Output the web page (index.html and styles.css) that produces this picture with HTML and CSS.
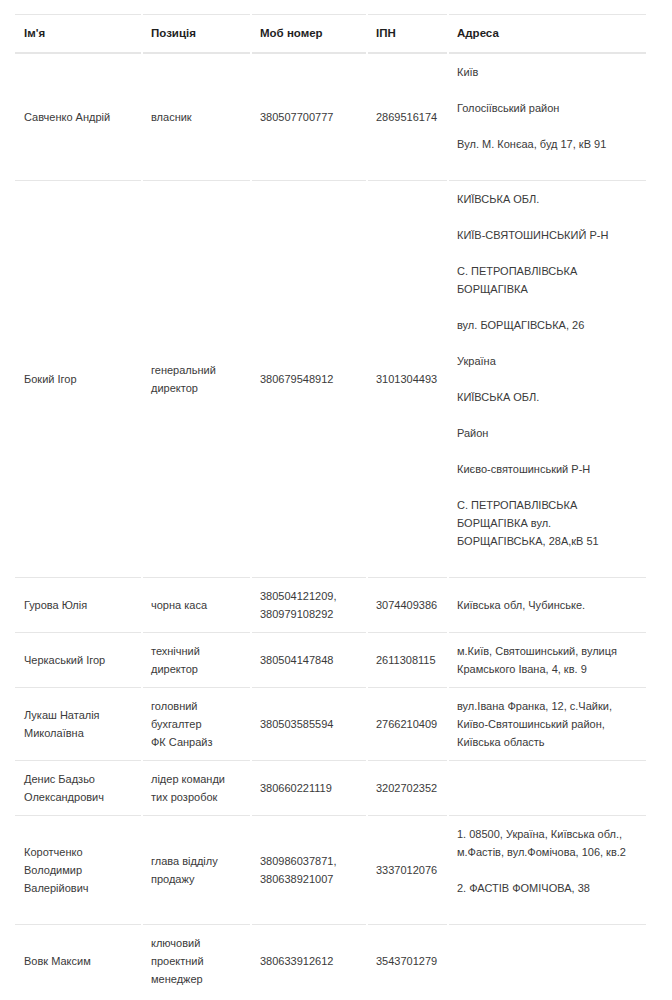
FILE: index.html
```html
<!DOCTYPE html>
<html lang="uk">
<head>
<meta charset="utf-8">
<title>Контакти</title>
<link rel="stylesheet" href="styles.css">
</head>
<body>
<div class="wrap">
<table class="people">
  <colgroup>
    <col class="c-name"><col class="c-pos"><col class="c-phone"><col class="c-ipn"><col class="c-addr">
  </colgroup>
  <thead>
    <tr><th>Ім'я</th><th>Позиція</th><th>Моб номер</th><th>ІПН</th><th>Адреса</th></tr>
  </thead>
  <tbody>
    <tr>
      <td>Савченко Андрій</td>
      <td>власник</td>
      <td>380507700777</td>
      <td>2869516174</td>
      <td><p>Київ</p><p>Голосіївський район</p><p>Вул. М. Конєаа, буд 17, кВ 91</p></td>
    </tr>
    <tr>
      <td>Бокий Ігор</td>
      <td>генеральний директор</td>
      <td>380679548912</td>
      <td>3101304493</td>
      <td><p>КИЇВСЬКА ОБЛ.</p><p>КИЇВ-СВЯТОШИНСЬКИЙ Р-Н</p><p>С. ПЕТРОПАВЛІВСЬКА БОРЩАГІВКА</p><p>вул. БОРЩАГІВСЬКА, 26</p><p>Україна</p><p>КИЇВСЬКА ОБЛ.</p><p>Район</p><p>Києво-святошинський Р-Н</p><p>С. ПЕТРОПАВЛІВСЬКА БОРЩАГІВКА вул. БОРЩАГІВСЬКА, 28А,кВ 51</p></td>
    </tr>
    <tr>
      <td>Гурова Юлія</td>
      <td>чорна каса</td>
      <td>380504121209, 380979108292</td>
      <td>3074409386</td>
      <td>Київська обл, Чубинське.</td>
    </tr>
    <tr>
      <td>Черкаський Ігор</td>
      <td>технічний директор</td>
      <td>380504147848</td>
      <td>2611308115</td>
      <td>м.Київ, Святошинський, вулиця Крамського Івана, 4, кв. 9</td>
    </tr>
    <tr>
      <td>Лукаш Наталія Миколаївна</td>
      <td>головний бухгалтер<br>ФК Санрайз</td>
      <td>380503585594</td>
      <td>2766210409</td>
      <td>вул.Івана Франка, 12, с.Чайки, Київо-Святошинський район, Київська область</td>
    </tr>
    <tr>
      <td>Денис Бадзьо Олександрович</td>
      <td>лідер команди тих розробок</td>
      <td>380660221119</td>
      <td>3202702352</td>
      <td></td>
    </tr>
    <tr>
      <td>Коротченко Володимир Валерійович</td>
      <td>глава відділу продажу</td>
      <td>380986037871, 380638921007</td>
      <td>3337012076</td>
      <td><p>1. 08500, Україна, Київська обл., м.Фастів, вул.Фомічова, 106, кв.2</p><p>2. ФАСТІВ ФОМІЧОВА, 38</p></td>
    </tr>
    <tr>
      <td>Вовк Максим</td>
      <td>ключовий проектний менеджер</td>
      <td>380633912612</td>
      <td>3543701279</td>
      <td></td>
    </tr>
  </tbody>
</table>
</div>
</body>
</html>
```
FILE: styles.css
```css
html, body {
  margin: 0;
  padding: 0;
  background: #ffffff;
}

body {
  font-family: "Liberation Sans", Arial, sans-serif;
  font-size: 11px;
  line-height: 18px;
  color: #3a3a3a;
}

.wrap {
  padding: 14px 0 0 13px;
}

.people {
  table-layout: fixed;
  width: 635px;
  border-collapse: separate;
  border-spacing: 2px 0;
}

.c-name { width: 126px; }
.c-pos { width: 107px; }
.c-phone { width: 114px; }
.c-ipn { width: 79px; }
.c-addr { width: 197px; }

.people th {
  text-align: left;
  font-size: 11.5px;
  font-weight: bold;
  color: #1f1f1f;
  padding: 9px 8px 10px 9px;
  border-top: 1px solid #e6e6e6;
  border-bottom: 1px solid #e6e6e6;
}

.people td {
  vertical-align: middle;
  padding: 9px 8px 9px 9px;
  border-top: 1px solid #e6e6e6;
}

.people th + th,
.people td + td {
  padding-left: 8px;
}

.people td p {
  margin: 0 0 18px;
}
```
